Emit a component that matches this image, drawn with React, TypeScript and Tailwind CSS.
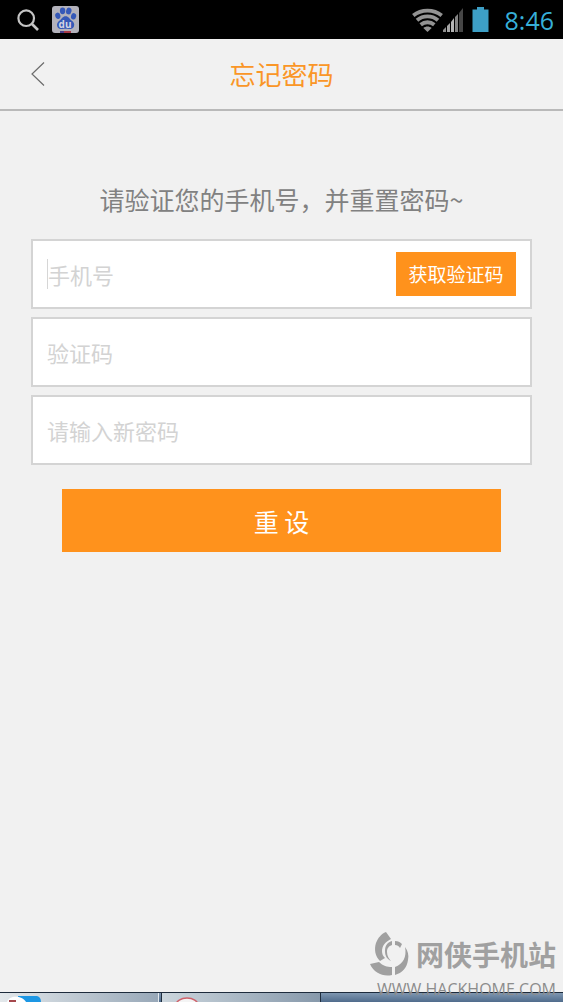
import { useState } from 'react';

type Field = {
  key: string;
  placeholder: string;
  type: string;
};

const fields: Field[] = [
  { key: 'code', placeholder: '验证码', type: 'text' },
  { key: 'password', placeholder: '请输入新密码', type: 'password' },
];

function SearchIcon() {
  return (
    <svg width="22" height="22" viewBox="0 0 22 22" fill="none" stroke="#c4c4c4">
      <circle cx="9.2" cy="9.2" r="7.8" strokeWidth="2.2" />
      <path d="M15 15l6 6" strokeWidth="2.6" />
    </svg>
  );
}

function BaiduIcon() {
  return (
    <svg width="27" height="27" viewBox="0 0 27 27">
      <rect width="27" height="27" rx="3" fill="#b3b2bb" />
      <g fill="#3558b8">
        <ellipse cx="10.6" cy="4.8" rx="2.7" ry="3.4" />
        <ellipse cx="16.8" cy="5" rx="2.7" ry="3.4" transform="rotate(12 16.8 5)" />
        <ellipse cx="5.8" cy="9.8" rx="2.6" ry="3.2" transform="rotate(-12 5.8 9.8)" />
        <ellipse cx="21.6" cy="10.3" rx="2.6" ry="3.2" transform="rotate(12 21.6 10.3)" />
        <path d="M13.6 10.2c3 0 3.9 2.7 6 4.3 2.3 1.700 3.200 3.500 2.300 5.900-.9 2.400-3.200 2.900-5.300 2.600-2-.3-4-.3-6 0-2.300.3-4.500-.3-5.300-2.600-.9-2.400.2-4.200 2.300-5.900 2.100-1.600 3-4.300 6-4.300z" />
      </g>
      <text
        x="13"
        y="21.5"
        textAnchor="middle"
        fontSize="10"
        fontWeight="700"
        fontFamily="Open Sans, sans-serif"
        fill="#d3d5e2"
      >
        du
      </text>
      <path d="M8 25h4v2H8z" fill="#4a3f8c" />
      <path d="M12 25h7v2h-7z" fill="#a83a48" />
    </svg>
  );
}

function WifiIcon() {
  return (
    <svg width="31" height="24" viewBox="0 0 31 24" fill="none" stroke="#939393" strokeWidth="3.8">
      <path d="M1.3 7.500c8-6.600 20.400-6.600 28.400 0" />
      <path d="M5 12.200c6-5.200 15-5.200 21 0" />
      <path d="M8.700 16.800c4-3.400 9.600-3.400 13.600 0" />
      <path d="M11.300 20c2.500-2 5.900-2 8.400 0l-4.200 4z" fill="#939393" stroke="none" />
    </svg>
  );
}

function SignalIcon() {
  return (
    <svg width="21" height="24" viewBox="0 0 21 24">
      <path d="M0 24v-2l3-3v5z" fill="#8f8f8f" />
      <path d="M4 24v-6l3-3v9z" fill="#a5a5a5" />
      <path d="M8 24V14l3-4v14z" fill="#b5b5b5" />
      <path d="M12 24V9l3-3v18z" fill="#858585" />
      <path d="M16 24V5l4-5v24z" fill="#464646" />
    </svg>
  );
}

function BatteryIcon() {
  return (
    <svg width="17" height="25" viewBox="0 0 17 25">
      <path d="M5 0h7v2.500h4.500V25H.5V2.500H5z" fill="#3d9fc6" />
    </svg>
  );
}

function StatusBar() {
  return (
    <header className="flex h-[39px] items-center justify-between bg-black pl-[17px] pr-[9px]">
      <div className="flex items-center gap-[13px]">
        <SearchIcon />
        <BaiduIcon />
      </div>
      <div className="flex items-center">
        <WifiIcon />
        <SignalIcon />
        <span className="ml-2">
          <BatteryIcon />
        </span>
        <time className="ml-4 text-[25px] leading-8 text-[#37afd8] font-['Open_Sans',sans-serif]">
          8:46
        </time>
      </div>
    </header>
  );
}

function TitleBar() {
  return (
    <div className="grid h-[72px] grid-cols-[1fr_auto_1fr] items-center border-b-2 border-[#b9b9b9]">
      <button type="button" aria-label="返回" className="justify-self-start pl-[31px]">
        <svg width="14" height="24" viewBox="0 0 14 24" fill="none" stroke="#6c6c6c" strokeWidth="1.2">
          <path d="M13 .5L1 12l12 11.500" />
        </svg>
      </button>
      <h1 className="text-[26px] leading-8 text-[#fa9627]">忘记密码</h1>
    </div>
  );
}

function Watermark() {
  return (
    <div className="absolute right-[7px] bottom-0 flex flex-col items-end text-[#a0a0a0]">
      <div className="flex items-center gap-[6px]">
        <svg width="40" height="44" viewBox="0 0 40 44" fill="#a0a0a0">
          <path d="M16 0l5 7c-6 3-9 7-9 12 0 3 1 5 3 7l-5 3C5 24 4 17 6 11 8 6 11 2 16 0z" />
          <path d="M0 32l9-2c4 4 8 5 13 5v8c-9 2-18-2-22-11z" />
          <path d="M25 35c8-3 12-10 10-20 3 4 4 8 3 13-1 8-6 13-13 15z" />
          <path d="M15 19c0-6 3-9 7-10v4c-3 1-5 3-5 7 0 4 2 7 4 9-4-2-6-5-6-10z" />
          <path d="M25 9c3 0 5 1 7 3l-2 4c-1-2-3-3-5-3z" />
        </svg>
        <span className="text-[28px] leading-[42px] font-bold">网侠手机站</span>
      </div>
      <span className="text-[16px] leading-[26px] text-[#8c8c8c] font-['Open_Sans',sans-serif]">
        WWW.HACKHOME.COM
      </span>
    </div>
  );
}

function Taskbar() {
  return (
    <footer className="relative">
      <div className="flex h-[10px] overflow-hidden border-t border-[#1d2b3c] bg-linear-to-b from-[#7f97b1] to-[#506c8c]">
        <div className="w-[159px] border-r border-[#e3e9ee] bg-linear-to-r from-[#e3e8eb] to-[#98a8b8]">
          <svg width="44" height="9" viewBox="0 0 44 9">
            <path d="M18 3h19q4 1 4 6H18z" fill="#1d97e4" />
            <path d="M7 9C9 2 22 2 26 9z" fill="#ffffff" />
            <path d="M9 7h7v2H9z" fill="#a5484d" />
          </svg>
        </div>
        <div className="ml-[2px] w-[160px] border-x border-[#1f2e3f] bg-linear-to-r from-[#ccd6dd] to-[#8799ab]">
          <svg width="44" height="9" viewBox="0 0 44 9">
            <ellipse cx="25" cy="12" rx="11" ry="7" fill="#f4f4f4" stroke="#d0626b" strokeWidth="1.5" />
          </svg>
        </div>
      </div>
      <Watermark />
    </footer>
  );
}

export default function App() {
  const [values, setValues] = useState<Record<string, string>>({});

  const update = (key: string, value: string) => setValues({ ...values, [key]: value });

  return (
    <div
      lang="zh-CN"
      className="flex min-h-screen flex-col bg-[#f1f1f1] font-['Noto_Sans_CJK_SC',sans-serif]"
    >
      <StatusBar />
      <TitleBar />

      <main className="flex-1 px-[31px] pt-[72px]">
        <p className="text-center text-[25px] leading-8 text-[#818181]">
          请验证您的手机号，并重置密码~
        </p>

        <form className="mt-6 flex flex-col gap-2" onSubmit={(event) => event.preventDefault()}>
          <div className="flex h-[70px] items-center border-2 border-[#d4d4d4] bg-white px-[14px]">
            <span className="h-[30px] w-px bg-[#d6d6d6]" />
            <input
              type="tel"
              aria-label="手机号"
              placeholder="手机号"
              value={values.phone ?? ''}
              onChange={(event) => update('phone', event.target.value)}
              className="h-full min-w-0 flex-1 text-[22px] outline-none placeholder:text-[#d3d3d3]"
            />
            <button
              type="button"
              className="h-[44px] w-[120px] bg-[#ff921c] text-[19px] leading-6 text-white"
            >
              获取验证码
            </button>
          </div>

          {fields.map((field) => (
            <input
              key={field.key}
              type={field.type}
              aria-label={field.placeholder}
              placeholder={field.placeholder}
              value={values[field.key] ?? ''}
              onChange={(event) => update(field.key, event.target.value)}
              className="h-[70px] border-2 border-[#d4d4d4] bg-white px-[14px] text-[22px] outline-none placeholder:text-[#d3d3d3]"
            />
          ))}

          <button
            type="submit"
            className="mx-[31px] mt-4 h-[63px] bg-[#ff921c] text-[25px] leading-8 text-white"
          >
            重 设
          </button>
        </form>
      </main>

      <Taskbar />
    </div>
  );
}
